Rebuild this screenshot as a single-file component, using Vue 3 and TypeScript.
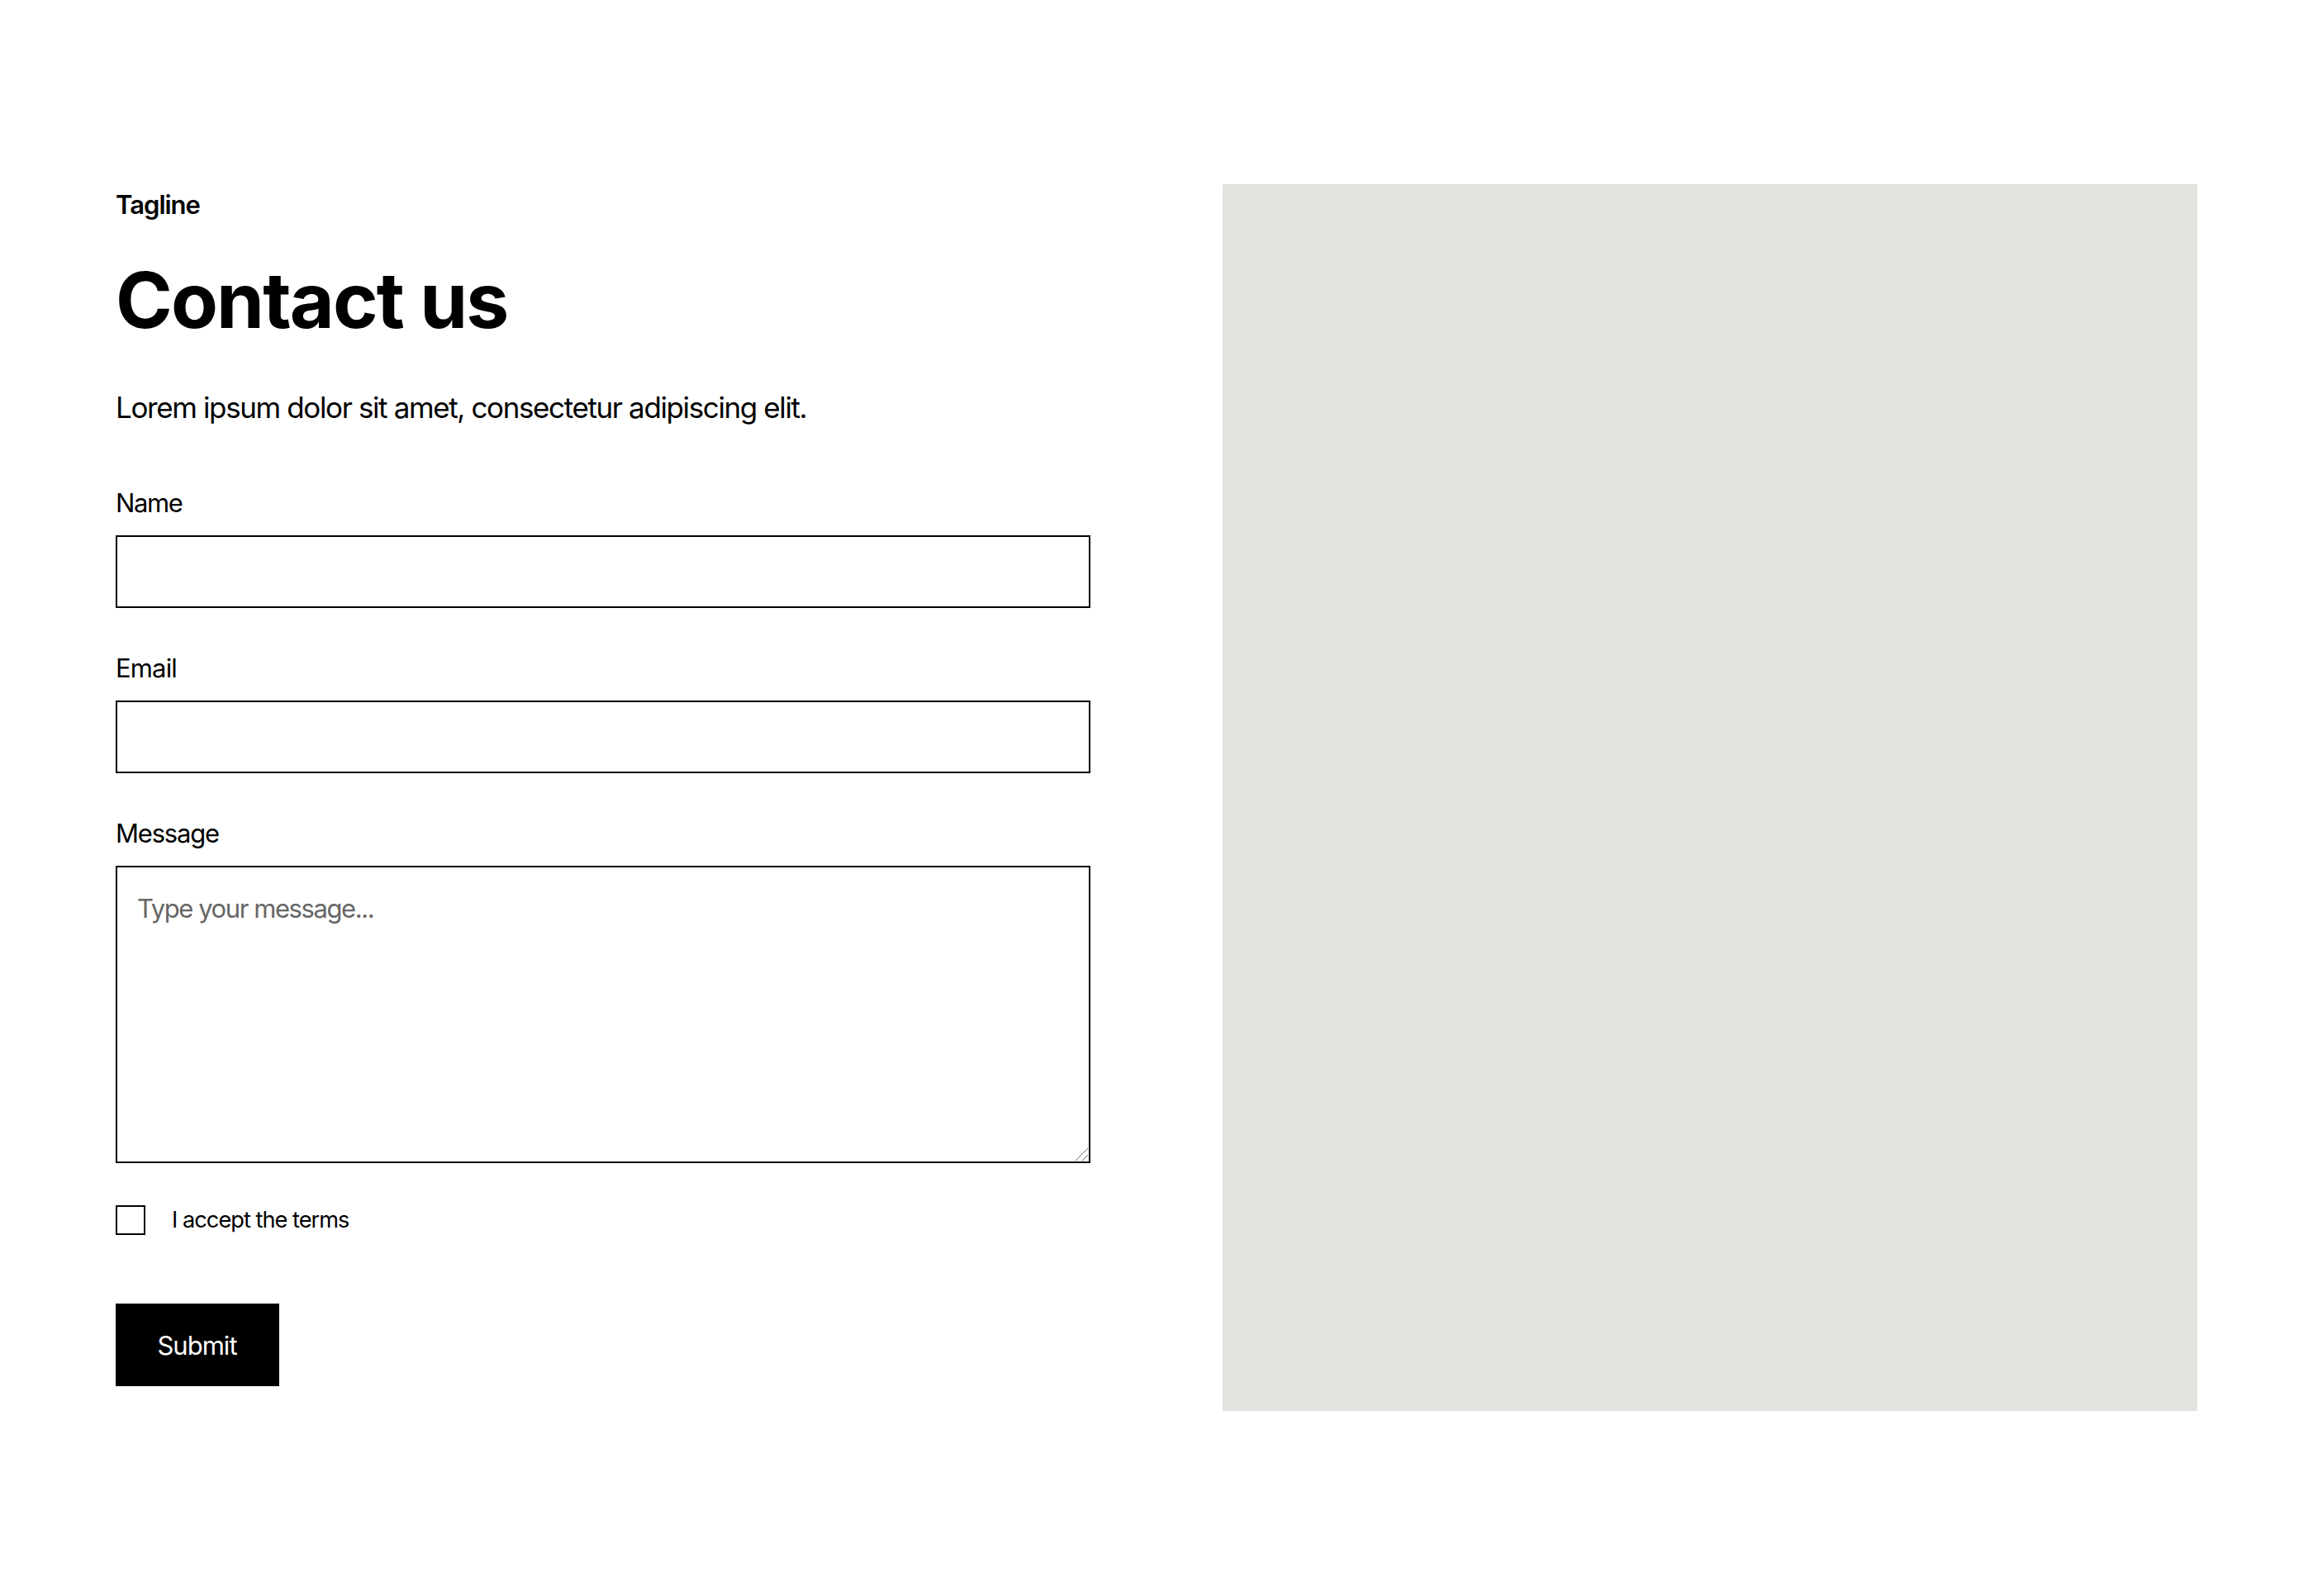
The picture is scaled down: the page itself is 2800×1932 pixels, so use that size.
<script setup lang="ts">
interface Field {
  id: string
  label: string
  type: string
}

const fields: Field[] = [
  { id: 'name', label: 'Name', type: 'text' },
  { id: 'email', label: 'Email', type: 'email' },
]

// Diagonal run of single-pixel squares for the textarea's resize handle.
const diagonal = (from: number, sum: number): string =>
  Array.from({ length: 15 - from }, (_, i) => `M${from + i} ${sum - from - i}h1v1h-1z`).join('')

const grip: string = diagonal(0, 14) + diagonal(8, 22)
</script>

<template>
  <section class="contact">
    <div class="content">
      <p class="tagline">Tagline</p>
      <h1 class="title">Contact us</h1>
      <p class="lead">Lorem ipsum dolor sit amet, consectetur adipiscing elit.</p>
      <form class="form" @submit.prevent>
        <div v-for="f in fields" :key="f.id" class="field">
          <label class="label" :class="f.id" :for="f.id">{{ f.label }}</label>
          <input :id="f.id" class="input" :type="f.type" />
        </div>
        <div class="field">
          <label class="label" for="message">Message</label>
          <div class="area">
            <textarea id="message" class="input message" placeholder="Type your message..."></textarea>
            <svg class="grip" width="15" height="15" viewBox="0 0 15 15" shape-rendering="crispEdges">
              <path :d="grip" fill="#666" />
            </svg>
          </div>
        </div>
        <label class="terms">
          <input class="box" type="checkbox" />
          <span class="terms-text">I accept the terms</span>
        </label>
        <button class="submit" type="submit">Submit</button>
      </form>
    </div>
    <div class="map"></div>
  </section>
</template>

<style>
body { background: #fff; }
</style>

<style scoped>
* { box-sizing: border-box; }
.contact {
  display: grid;
  grid-template-columns: 1fr 1fr;
  gap: 160px;
  height: 1932px;
  padding: 223px 140px 224px;
  font-family: Inter, "Liberation Sans", sans-serif;
  color: #000;
}
.content { padding-top: 1px; }
.tagline { margin: 0; font-size: 31px; line-height: 48px; font-weight: 600; letter-spacing: -1px; }
.title { margin: 34px 0 0; font-size: 93px; line-height: 115px; font-weight: 700; letter-spacing: -1.86px; }
.lead { margin: 45px 0 0; font-size: 35px; line-height: 54px; letter-spacing: -1.38px; }
.form { display: flex; flex-direction: column; align-items: flex-start; margin-top: 64px; }
.field { width: 100%; margin-bottom: 48px; }
.label {
  display: block;
  height: 48px;
  margin-bottom: 16px;
  padding-top: 1px;
  font-size: 31px;
  line-height: 48px;
  letter-spacing: -1.2px;
}
.label.name { letter-spacing: -1.4px; }
.label.email { letter-spacing: -0.85px; }
.input {
  display: block;
  width: 100%;
  height: 88px;
  margin: 0;
  padding: 16px 24px;
  border: 2px solid #000;
  border-radius: 0;
  background: #fff;
  font: 31px/48px Inter, "Liberation Sans", sans-serif;
  letter-spacing: -1.42px;
  outline: none;
}
.area { position: relative; }
.message { height: 360px; padding: 26px 24px; resize: none; }
.message::placeholder { color: #666; opacity: 1; }
.grip { position: absolute; right: 3px; bottom: 3px; }
.terms { display: flex; align-items: center; gap: 32px; height: 42px; }
.box { appearance: none; width: 36px; height: 36px; margin: 0; border: 2px solid #000; background: #fff; }
.terms-text { font-size: 27.2px; line-height: 42px; letter-spacing: -0.98px; }
.submit {
  width: 198px;
  height: 100px;
  margin-top: 80px;
  padding: 1px 1px 0 0;
  border: 0;
  background: #000;
  color: #fff;
  font: 31px/48px Inter, "Liberation Sans", sans-serif;
  letter-spacing: -0.98px;
}
.map { background: #e5e3df; }
</style>
